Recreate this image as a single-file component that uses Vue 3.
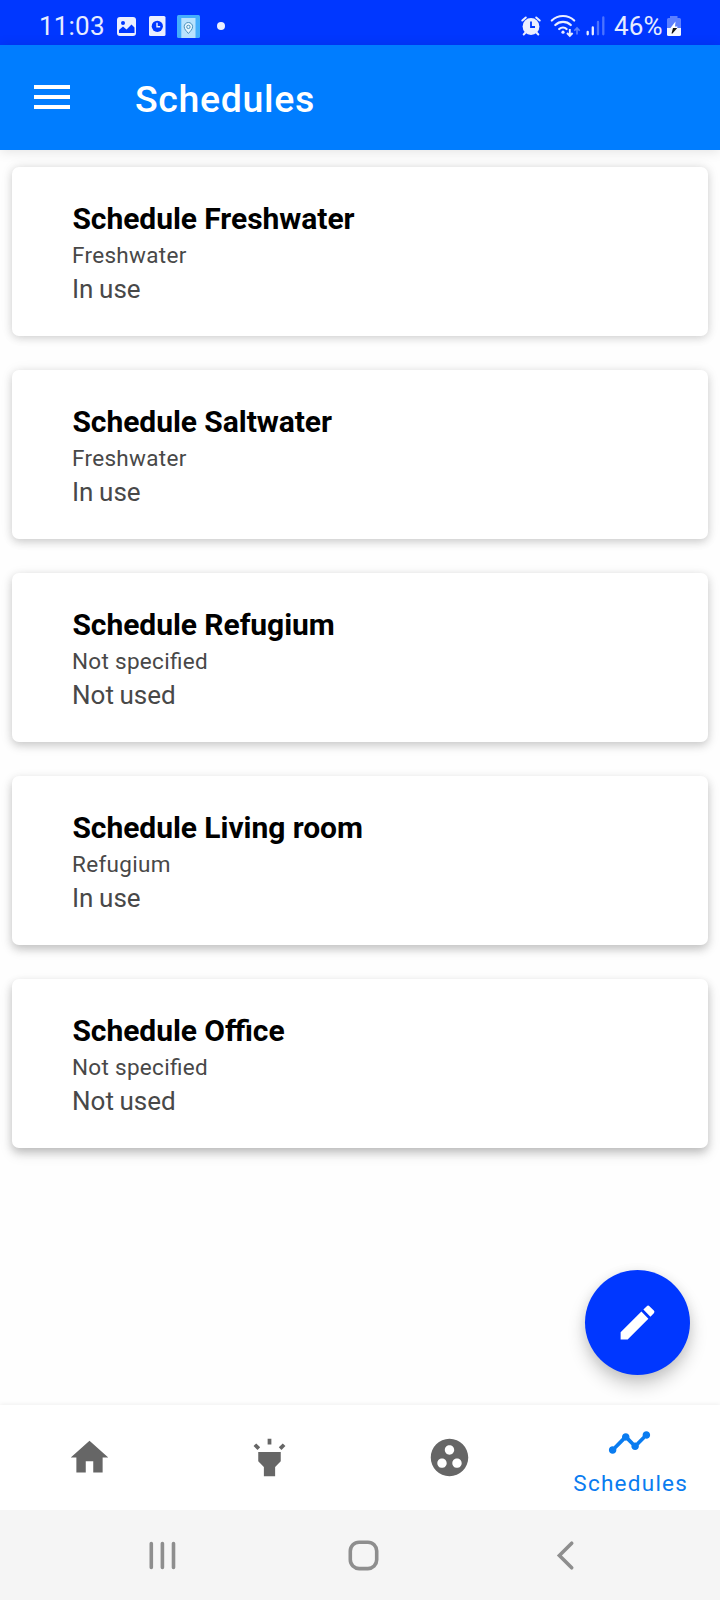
<script setup>
const schedules = [
  { title: 'Schedule Freshwater', zone: 'Freshwater', state: 'In use' },
  { title: 'Schedule Saltwater', zone: 'Freshwater', state: 'In use' },
  { title: 'Schedule Refugium', zone: 'Not specified', state: 'Not used' },
  { title: 'Schedule Living room', zone: 'Refugium', state: 'In use' },
  { title: 'Schedule Office', zone: 'Not specified', state: 'Not used' },
]

const tabs = [
  { name: 'home', path: 'M10 20v-6h4v6h5v-8h3L12 3 2 12h3v8z' },
  {
    name: 'lights',
    path: 'M6 14l3 3v5h6v-5l3-3V9H6v5zm5-12h2v3h-2V2zM3.5 5.88l1.41-1.41 2.12 2.12L5.62 8 3.5 5.88zm13.46.71l2.12-2.12 1.41 1.41L18.38 8l-1.42-1.41z',
  },
  {
    name: 'groups',
    path: 'M12 2C6.48 2 2 6.48 2 12s4.48 10 10 10 10-4.48 10-10S17.52 2 12 2zM8 17.5c-1.38 0-2.5-1.12-2.5-2.5s1.12-2.5 2.5-2.5 2.5 1.12 2.5 2.5-1.12 2.5-2.5 2.5zM9.5 8c0-1.38 1.12-2.5 2.5-2.5s2.5 1.12 2.5 2.5-1.12 2.5-2.5 2.5S9.5 9.38 9.5 8zm6.5 9.5c-1.38 0-2.5-1.12-2.5-2.5s1.12-2.5 2.5-2.5 2.5 1.12 2.5 2.5-1.12 2.5-2.5 2.5z',
  },
  {
    name: 'schedules',
    label: 'Schedules',
    path: 'M23 8c0 1.1-.9 2-2 2-.18 0-.35-.02-.51-.07l-3.56 3.55c.05.16.07.34.07.52 0 1.1-.9 2-2 2s-2-.9-2-2c0-.18.02-.36.07-.52l-2.55-2.55c-.16.05-.34.07-.52.07s-.36-.02-.52-.07l-4.55 4.56c.05.16.07.33.07.51 0 1.1-.9 2-2 2s-2-.9-2-2 .9-2 2-2c.18 0 .35.02.51.07l4.56-4.55C8.02 9.36 8 9.18 8 9c0-1.1.9-2 2-2s2 .9 2 2c0 .18-.02.36-.07.52l2.55 2.55c.16-.05.34-.07.52-.07s.36.02.52.07l3.55-3.56C19.02 8.35 19 8.18 19 8c0-1.1.9-2 2-2s2 .9 2 2z',
  },
]
</script>

<template>
  <div class="screen">
    <header class="status">
      <span class="time">11:03</span>
      <svg class="notices" width="112" height="45" viewBox="114 0 112 45">
        <rect x="117" y="17" width="19" height="19" rx="3" fill="#ebefff" />
        <circle cx="123" cy="23" r="2" fill="#0037ff" />
        <path d="M119 33v-3l4-3.500 3.500 3 5-5 3 3V33z" fill="#0037ff" />
        <rect x="149" y="16" width="16.500" height="20" rx="1.500" fill="#ebefff" />
        <circle cx="157.300" cy="26.300" r="5.600" fill="#0037ff" />
        <path d="M157 22.800v4h3.200" fill="none" stroke="#ebefff" stroke-width="1.400" />
        <rect x="177" y="15" width="23" height="23" rx="1.500" fill="#45aefc" />
        <rect x="181.300" y="18" width="14.200" height="20" fill="#b9e2fd" />
        <path d="M188.400 33.500c-2-2.400-4.200-4.300-4.200-6.800a4.200 4.200 0 0 1 8.400 0c0 2.500-2.200 4.400-4.200 6.800z" fill="#e6f6ff" stroke="#4a91bd" stroke-width="1" />
        <circle cx="188.400" cy="26.900" r="1.700" fill="none" stroke="#4a91bd" stroke-width="1" />
        <circle cx="221" cy="26" r="4" fill="#ebefff" />
      </svg>
      <span class="grow"></span>
      <svg width="90" height="45" viewBox="518 0 90 45">
        <circle cx="531" cy="26.500" r="8.400" fill="#ebefff" />
        <path d="M522.300 20.500l3.500-3M539.700 20.500l-3.500-3M526 32l-2.300 2.500M536 32l2.300 2.500" stroke="#ebefff" stroke-width="2" stroke-linecap="round" />
        <path d="M531 21.500v5.500h4" fill="none" stroke="#0037ff" stroke-width="1.800" />
        <g fill="none" stroke="#ebefff" stroke-width="2.200" stroke-linecap="round">
          <path d="M551.800 20.500c6.200-6 16.200-6 22.400 0" />
          <path d="M555.300 25c4.300-4.200 11.200-4.200 15.500 0" />
          <path d="M559.200 29c2.200-2 5.400-2 7.400 0" />
        </g>
        <circle cx="563" cy="32.200" r="1.600" fill="#ebefff" />
        <path d="M569.800 29v6.500M567 33l2.800 2.800 2.800-2.800" fill="none" stroke="#ebefff" stroke-width="1.900" />
        <path d="M577 34.500V28M574.300 30.800l2.700-2.800 2.700 2.800" fill="none" stroke="#5c82ff" stroke-width="1.600" />
        <g stroke-width="2.300" stroke-linecap="round">
          <path d="M587.700 32v2.300M592.800 27.500v6.800" stroke="#ebefff" />
          <path d="M598 22v12.300M603.300 17.500v16.800" stroke="#4b73ff" />
        </g>
      </svg>
      <span class="battery-text">46%</span>
      <svg width="16" height="45" viewBox="666 0 16 45">
        <path d="M670 16h7.500v2h2q1.500 0 1.500 1.500V29h-14v-9.500q0-1.500 1.500-1.500h1.500z" fill="#5c7fff" />
        <path d="M667 28h14v6.500q0 1.500-1.500 1.500h-11q-1.500 0-1.500-1.500z" fill="#f5f7ff" />
        <path d="M675.500 21.500l-5 6.500h6.700l.3-1.500h-2.500z" fill="#fff" />
        <path d="M673 28h4.200l-4.700 5.500h-1z" fill="#111" />
      </svg>
    </header>

    <div class="appbar">
      <svg class="menu" width="48" height="48" viewBox="0 0 24 24" fill="#fff">
        <path d="M3 18h18v-2H3v2zm0-5h18v-2H3v2zm0-7v2h18V6H3z" />
      </svg>
      <h1>Schedules</h1>
    </div>

    <main>
      <article v-for="s in schedules" :key="s.title" class="card">
        <h2>{{ s.title }}</h2>
        <p class="zone">{{ s.zone }}</p>
        <p class="state">{{ s.state }}</p>
      </article>
      <button class="fab" aria-label="Edit">
        <svg width="45" height="45" viewBox="0 0 24 24" fill="#fff">
          <path d="M3 17.250V21h3.750L17.810 9.940l-3.750-3.750L3 17.250zM20.710 7.040c.39-.39.39-1.020 0-1.410l-2.340-2.340c-.39-.39-1.020-.39-1.410 0l-1.830 1.830 3.750 3.750 1.830-1.830z" />
        </svg>
      </button>
    </main>

    <nav class="tabs">
      <a v-for="t in tabs" :key="t.name" class="tab" :class="{ active: t.label }">
        <svg width="45" height="45" viewBox="0 0 24 24" fill="currentColor"><path :d="t.path" /></svg>
        <span v-if="t.label">{{ t.label }}</span>
      </a>
    </nav>

    <footer class="system">
      <svg width="720" height="90" viewBox="0 1510 720 90" fill="none" stroke="#8e8e8e" stroke-width="3.600" stroke-linecap="round">
        <path d="M151.300 1543.500v24M162.400 1543.500v24M173.500 1543.500v24" />
        <rect x="350.300" y="1542.200" width="26.400" height="26.400" rx="8.800" />
        <path d="M571.700 1543.200l-12.300 12.300 12.300 12.300" />
      </svg>
    </footer>
  </div>
</template>

<style>
body { margin: 0; background: #fefefe; }
</style>

<style scoped>
.screen {
  width: 720px;
  height: 1600px;
  display: flex;
  flex-direction: column;
  overflow: hidden;
  background: #fefefe;
  font-family: Roboto, "Noto Sans", sans-serif;
}
svg { display: block; flex: none; }
h1, h2, p { margin: 0; white-space: nowrap; }
.status {
  height: 45px;
  flex: none;
  display: flex;
  align-items: center;
  padding-right: 38px;
  background: #0037ff;
  color: #e6ecff;
  font-size: 26px;
  line-height: 45px;
}
.time { width: 75px; padding: 7px 0 0 39px; box-sizing: content-box; letter-spacing: 0.2px; }
.grow { flex: 1; }
.battery-text { width: 52px; margin-left: 6px; padding-top: 7px; letter-spacing: 0.1px; }
.appbar {
  height: 105px;
  flex: none;
  display: flex;
  align-items: center;
  padding: 0 28px;
  background: #007dff;
  color: #fff;
  box-shadow: 0 1px 12px rgba(0, 0, 0, 0.12);
  z-index: 1;
}
.menu { margin-bottom: 2px; }
h1 { margin: 3px 0 0 59px; font-size: 37.5px; font-weight: 500; line-height: 44px; letter-spacing: 0.65px; }
main {
  position: relative;
  flex: 1;
  display: flex;
  flex-direction: column;
  gap: 34px;
  padding: 17px 12px 0;
}
.card {
  box-sizing: border-box;
  height: 169px;
  flex: none;
  padding: 34px 60px 0;
  border-radius: 7px;
  background: #fff;
  box-shadow: 0 2px 8px rgba(0, 0, 0, 0.15), 0 0 14px rgba(0, 0, 0, 0.07);
}
.card:nth-child(2) { box-shadow: 0 3px 8px rgba(0, 0, 0, 0.16), 0 1px 14px rgba(0, 0, 0, 0.07); }
.card:nth-child(3) { box-shadow: 0 3px 8px rgba(0, 0, 0, 0.17), 0 3px 14px rgba(0, 0, 0, 0.08); }
.card:nth-child(4) { box-shadow: 0 4px 8px rgba(0, 0, 0, 0.18), 0 4px 14px rgba(0, 0, 0, 0.09); }
.card:nth-child(5) { box-shadow: 0 4px 9px rgba(0, 0, 0, 0.19), 0 6px 14px rgba(0, 0, 0, 0.11); }
h2, .zone { font-feature-settings: "liga" 1; }
h2 { color: #000; font-size: 30px; font-weight: 700; line-height: 36px; letter-spacing: -0.05px; padding-left: 0.4px; }
.zone { color: #484848; font-size: 22.5px; line-height: 36px; letter-spacing: 0.3px; }
.state { color: #484848; font-size: 26px; line-height: 32px; word-spacing: -0.8px; }
.fab {
  position: absolute;
  right: 30px;
  bottom: 30px;
  width: 105px;
  height: 105px;
  display: grid;
  place-items: center;
  padding: 0;
  border: 0;
  border-radius: 50%;
  background: #0037ff;
  box-shadow: 0 10px 18px rgba(0, 0, 0, 0.2), 0 2px 12px rgba(0, 0, 0, 0.08);
}
.tabs {
  height: 105px;
  flex: none;
  display: grid;
  grid-template-columns: repeat(4, 1fr);
  background: #fff;
  box-shadow: 0 -1px 4px rgba(0, 0, 0, 0.06);
}
.tab { display: flex; flex-direction: column; align-items: center; justify-content: center; padding-right: 1.5px; color: #666; }
.active { justify-content: flex-start; padding-top: 15px; color: #0a7cf0; }
.active span { font-size: 22.5px; line-height: 30px; margin: 3px 0 0 3px; letter-spacing: 1.25px; }
.system { height: 90px; flex: none; background: #f5f5f5; z-index: 1; }
</style>
